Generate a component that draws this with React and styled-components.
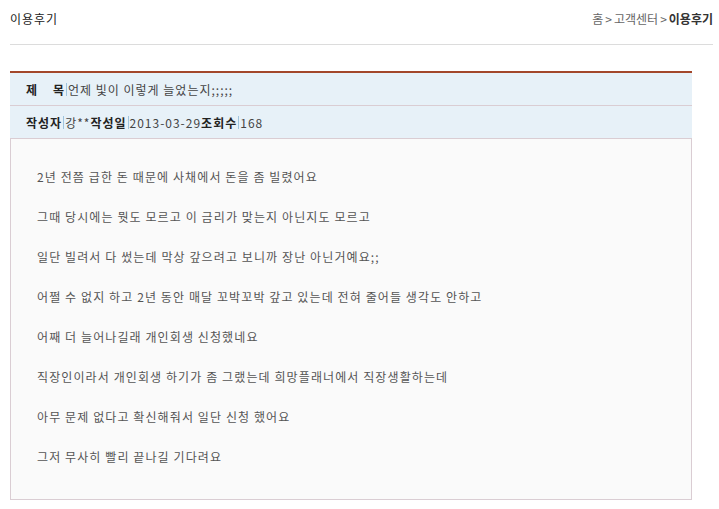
import styled, { createGlobalStyle } from 'styled-components'

const GlobalStyle = createGlobalStyle`
  html, body {
    margin: 0;
    padding: 0;
    background: #fff;
  }
  body {
    font-family: "Noto Sans CJK KR", "Noto Sans", sans-serif;
    font-size: 12px;
    letter-spacing: 1px;
    color: #333;
  }
`

const Page = styled.div`
  padding: 0 6px 0 10px;
  width: 703px;
`

const Header = styled.div`
  display: flex;
  justify-content: space-between;
  align-items: center;
  height: 36px;
  border-bottom: 1px solid #dcdcdc;
  padding-bottom: 8px;
`

const PageTitle = styled.h2`
  margin: 0;
  font-size: 12px;
  font-weight: normal;
  color: #222;
`

const Crumbs = styled.div`
  display: flex;
  align-items: center;
  gap: 2px;
  color: #666;
  letter-spacing: 0;
  & b {
    color: #333;
    font-weight: bold;
  }
`

const Board = styled.div`
  width: 682px;
  margin-top: 26px;
  border-top: 2px solid #a3472b;
`

const InfoRow = styled.div`
  display: flex;
  align-items: center;
  height: 32px;
  padding-left: 16px;
  background: #e7f1f8;
  border-bottom: 1px solid #dacdd3;
  color: #444;
`

const Label = styled.span`
  font-weight: bold;
  color: #222;
  white-space: pre;
`

const Bar = styled.span`
  display: inline-block;
  width: 1px;
  height: 13px;
  margin: 0 1px;
  background: #9fc4de;
`

const Content = styled.div`
  background: #fafafa;
  border: 1px solid #dacdd3;
  border-top: none;
  padding: 28px 26px 32px;
  height: 300px;
`

const Para = styled.p`
  margin: 0 0 20px;
  line-height: 20px;
  color: #555;
  letter-spacing: 1.1px;
`

const lines = [
  '2년 전쯤 급한 돈 때문에 사채에서 돈을 좀 빌렸어요',
  '그때 당시에는 뭣도 모르고 이 금리가 맞는지 아닌지도 모르고',
  '일단 빌려서 다 썼는데 막상 갚으려고 보니까 장난 아닌거예요;;',
  '어쩔 수 없지 하고 2년 동안 매달 꼬박꼬박 갚고 있는데 전혀 줄어들 생각도 안하고',
  '어째 더 늘어나길래 개인회생 신청했네요',
  '직장인이라서 개인회생 하기가 좀 그랬는데 희망플래너에서 직장생활하는데',
  '아무 문제 없다고 확신해줘서 일단 신청 했어요',
  '그저 무사히 빨리 끝나길 기다려요',
]

const App = () => {
  return (
    <Page>
      <GlobalStyle />
      <Header>
        <PageTitle>이용후기</PageTitle>
        <Crumbs>
          <span>홈</span>
          <span>&gt;</span>
          <span>고객센터</span>
          <span>&gt;</span>
          <b>이용후기</b>
        </Crumbs>
      </Header>
      <Board>
        <InfoRow>
          <Label>{'제    목'}</Label>
          <Bar />
          <span>언제 빛이 이렇게 늘었는지;;;;;</span>
        </InfoRow>
        <InfoRow>
          <Label>작성자</Label>
          <Bar />
          <span>강**</span>
          <Label>작성일</Label>
          <Bar />
          <span>2013-03-29</span>
          <Label>조회수</Label>
          <Bar />
          <span>168</span>
        </InfoRow>
        <Content>
          {lines.map((t, i) => (
            <Para key={i}>{t}</Para>
          ))}
        </Content>
      </Board>
    </Page>
  )
}

export default App
